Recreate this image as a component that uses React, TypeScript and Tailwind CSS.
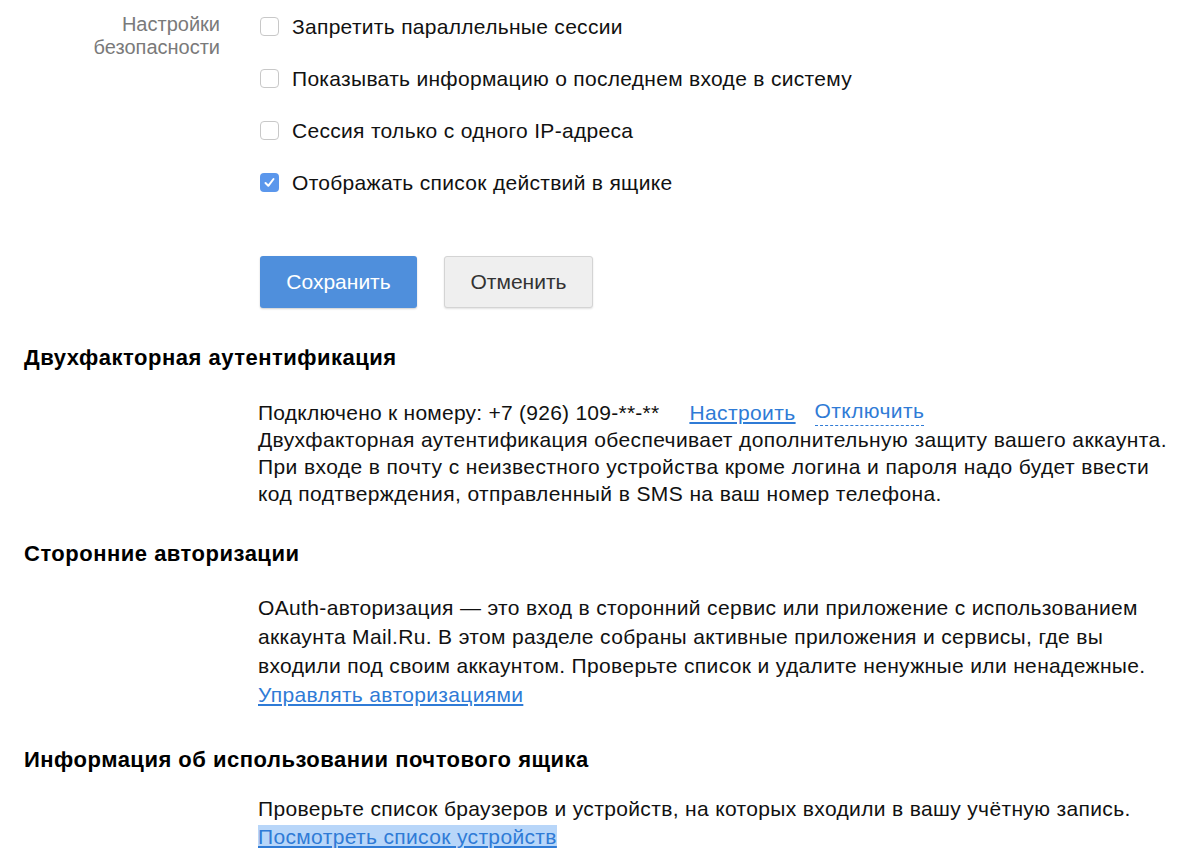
import React from 'react'

const font = { fontFamily: '"Liberation Sans", Arial, sans-serif' }

const Checkbox: React.FC<{ checked?: boolean }> = ({ checked }) =>
  checked ? (
    <span className="flex h-[19px] w-[19px] shrink-0 items-center justify-center rounded-[4px] bg-[#5b97ec]">
      <svg width="13" height="13" viewBox="0 0 13 13" fill="none">
        <path d="M2.5 7 L5.3 9.8 L10.5 3" stroke="white" strokeWidth="2" strokeLinecap="round" strokeLinejoin="round" />
      </svg>
    </span>
  ) : (
    <span className="h-[19px] w-[19px] shrink-0 rounded-[4px] border border-[#c8c8c8] bg-white" />
  )

const options = [
  { label: 'Запретить параллельные сессии', checked: false },
  { label: 'Показывать информацию о последнем входе в систему', checked: false },
  { label: 'Сессия только с одного IP-адреса', checked: false },
  { label: 'Отображать список действий в ящике', checked: true },
]

const Heading: React.FC<{ children: React.ReactNode }> = ({ children }) => (
  <h2 className="pl-6 text-[22px] font-bold leading-6 tracking-[0.5px] text-black">{children}</h2>
)

export default function App() {
  return (
    <div className="min-h-[868px] w-[1200px] bg-white text-[#111]" style={font}>
      <div className="flex pt-[13px]">
        <div className="w-[220px] text-right text-[20px] leading-[23px] text-[#7a7a7a]">
          Настройки
          <br />
          безопасности
        </div>
        <div className="ml-10 flex flex-col gap-[31px] pt-[3px] text-[21px] tracking-[0.3px]">
          {options.map((o) => (
            <label key={o.label} className="flex h-[21px] items-center gap-[13px]">
              <Checkbox checked={o.checked} />
              <span>{o.label}</span>
            </label>
          ))}
        </div>
      </div>

      <div className="ml-[260px] mt-[63px] flex gap-[27px] text-[21px]">
        <button className="h-[52px] w-[157px] rounded-[3px] bg-[#4f8fdc] text-white shadow-[0_1px_2px_rgba(0,0,0,0.2)]">
          Сохранить
        </button>
        <button className="h-[52px] w-[149px] rounded-[3px] border border-[#d4d4d4] bg-[#efefef] text-[#333] shadow-[0_1px_2px_rgba(0,0,0,0.12)]">
          Отменить
        </button>
      </div>

      <div className="mt-[38px]">
        <Heading>Двухфакторная аутентификация</Heading>
        <div className="ml-[258px] mt-[29px] text-[21px] leading-[27px] tracking-[0.4px]">
          <div className="flex">
            <span className="tracking-[0.25px]">Подключено к номеру: +7 (926) 109-**-**</span>
            <a className="ml-[30px] text-[#2f7bd6] underline underline-offset-2">Настроить</a>
            <a className="ml-[19px] border-b border-dashed border-[#2f7bd6] leading-[24px] text-[#2f7bd6]">Отключить</a>
          </div>
          <p>
            Двухфакторная аутентификация обеспечивает дополнительную защиту вашего аккаунта.
            <br />
            При входе в почту с неизвестного устройства кроме логина и пароля надо будет ввести
            <br />
            код подтверждения, отправленный в SMS на ваш номер телефона.
          </p>
        </div>
      </div>

      <div className="mt-[35px]">
        <Heading>Сторонние авторизации</Heading>
        <div className="ml-[258px] mt-[27px] text-[21px] leading-[29px] tracking-[0.35px]">
          <p>
            OAuth-авторизация — это вход в сторонний сервис или приложение с использованием
            <br />
            аккаунта Mail.Ru. В этом разделе собраны активные приложения и сервисы, где вы
            <br />
            входили под своим аккаунтом. Проверьте список и удалите ненужные или ненадежные.
          </p>
          <a className="text-[#2f7bd6] underline underline-offset-2">Управлять авторизациями</a>
        </div>
      </div>

      <div className="mt-[39px]">
        <Heading>Информация об использовании почтового ящика</Heading>
        <div className="ml-[258px] mt-[23px] text-[21px] leading-[28px] tracking-[0.35px]">
          <p>Проверьте список браузеров и устройств, на которых входили в вашу учётную запись.</p>
          <a className="bg-[#b8d6f9] text-[#2f7bd6] underline underline-offset-2">Посмотреть список устройств</a>
        </div>
      </div>
    </div>
  )
}
